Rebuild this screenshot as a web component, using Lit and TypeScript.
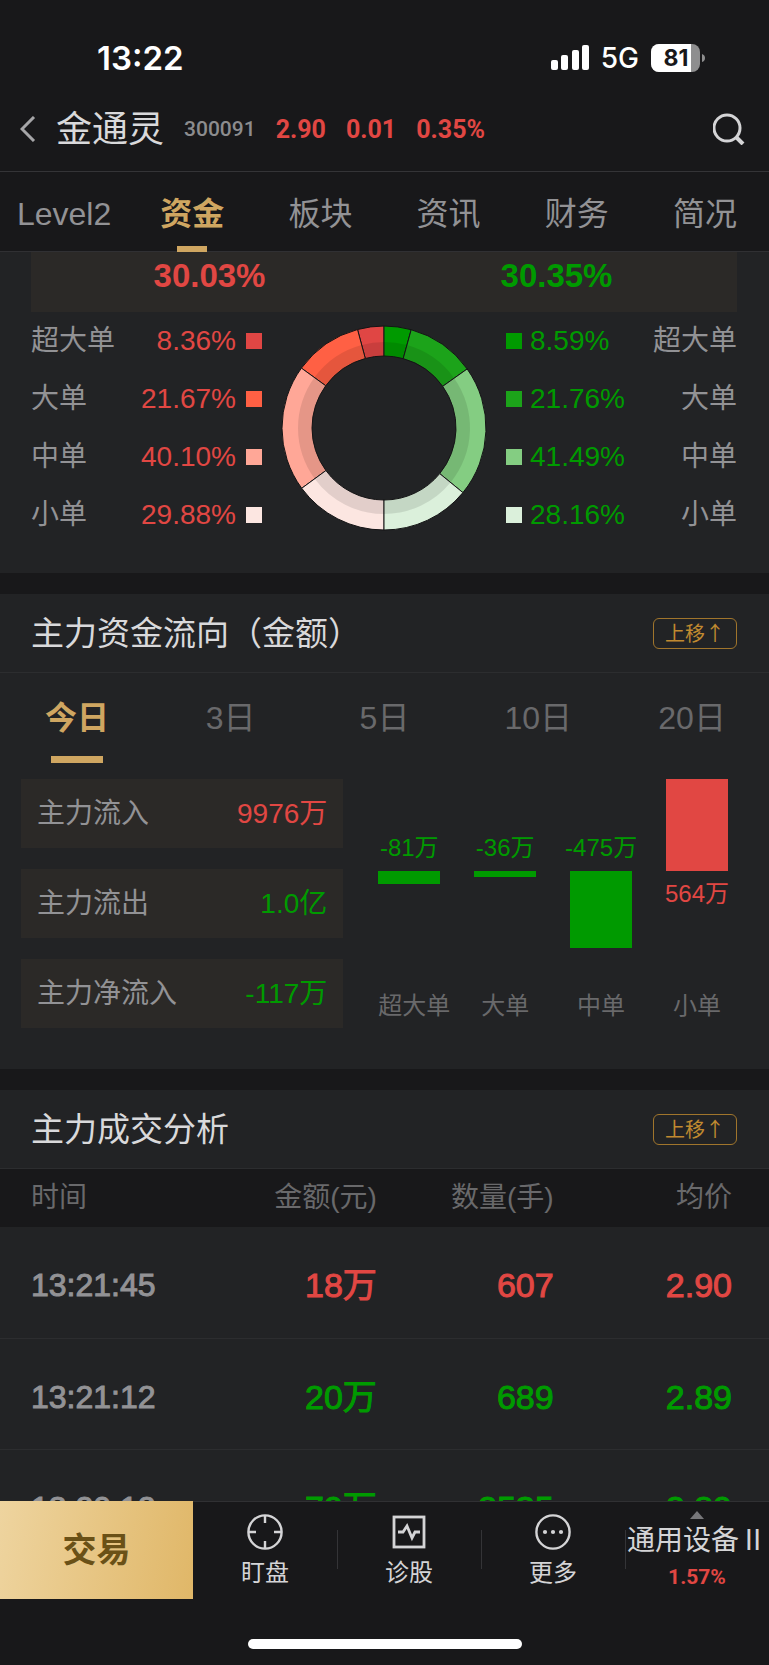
import { LitElement, html, css, svg } from "lit";
import { customElement, property } from "lit/decorators.js";
import { classMap } from "lit/directives/class-map.js";
import { styleMap } from "lit/directives/style-map.js";

const shared = css`
  :host,
  * {
    box-sizing: border-box;
  }
  button {
    margin: 0;
    padding: 0;
    border: 0;
    background: none;
    color: inherit;
    font: inherit;
    cursor: pointer;
  }
  h1, h2, p, ul {
    margin: 0;
    padding: 0;
    font-weight: 400;
    list-style: none;
  }
  .up {
    color: #e14743;
  }
  .down {
    color: #009a00;
  }
`;

interface Share {
  name: string;
  pct: number;
  color: string;
}

const INFLOW: Share[] = [
  { name: "超大单", pct: 8.36, color: "#e04644" },
  { name: "大单", pct: 21.67, color: "#ff6044" },
  { name: "中单", pct: 40.1, color: "#ffa797" },
  { name: "小单", pct: 29.88, color: "#fce6e1" },
];

const OUTFLOW: Share[] = [
  { name: "超大单", pct: 8.59, color: "#009a00" },
  { name: "大单", pct: 21.76, color: "#1ca31a" },
  { name: "中单", pct: 41.49, color: "#84cd82" },
  { name: "小单", pct: 28.16, color: "#dbf0db" },
];

const FLOWS = [
  { name: "超大单", value: -81 },
  { name: "大单", value: -36 },
  { name: "中单", value: -475 },
  { name: "小单", value: 564 },
];

const TRADES = [
  { time: "13:21:45", amount: "18万", count: "607", price: "2.90", dir: "up" },
  { time: "13:21:12", amount: "20万", count: "689", price: "2.89", dir: "down" },
  { time: "13:20:12", amount: "79万", count: "2535", price: "2.89", dir: "down" },
];

@customElement("status-bar")
export class StatusBar extends LitElement {
  static styles = [
    shared,
    css`
      :host {
        display: flex;
        align-items: center;
        justify-content: space-between;
        height: 87px;
        padding: 28px 64px 0 97px;
        color: #fff;
        font-family: Inter, sans-serif;
      }
      .time {
        font-size: 33px;
        font-weight: 600;
      }
      .right {
        display: flex;
        align-items: center;
        gap: 12px;
      }
      .net {
        font-size: 28px;
        font-weight: 500;
      }
      .battery text {
        font: 700 23px Inter, sans-serif;
        fill: #18181a;
      }
    `,
  ];
  render() {
    return html`
      <span class="time">13:22</span>
      <div class="right">
        <svg width="38" height="25" viewBox="0 0 38 25" fill="#fff" aria-label="信号">
          <rect x="0" y="15" width="7" height="10" rx="2" />
          <rect x="10" y="10" width="7" height="15" rx="2" />
          <rect x="21" y="5" width="7" height="20" rx="2" />
          <rect x="31" y="0" width="7" height="25" rx="2" />
        </svg>
        <span class="net">5G</span>
        <svg class="battery" width="54" height="28" viewBox="0 0 54 28">
          <clipPath id="cell"><rect width="49" height="28" rx="8" /></clipPath>
          <g clip-path="url(#cell)">
            <rect width="49" height="28" fill="#8e8e8f" />
            <rect width="40" height="28" fill="#fff" />
          </g>
          <path d="M51 10 Q54 11 54 14 Q54 17 51 18 Z" fill="#8e8e8f" />
          <text x="25" y="22" text-anchor="middle">81</text>
        </svg>
      </div>
    `;
  }
}

@customElement("stock-header")
export class StockHeader extends LitElement {
  static styles = [
    shared,
    css`
      :host {
        display: flex;
        align-items: center;
        height: 85px;
        padding: 0 24px 0 20px;
        border-bottom: 1px solid #343437;
      }
      svg {
        display: block;
      }
      .name {
        margin-left: 20px;
        padding-top: 2px;
        font-size: 36px;
        line-height: 44px;
        color: #d9d9db;
      }
      .quote {
        display: flex;
        align-items: center;
        gap: 20px;
        margin-left: 20px;
        font-family: Roboto, sans-serif;
        font-weight: 700;
        font-size: 25px;
      }
      .code {
        font-size: 21px;
        font-weight: 500;
        color: #8c8c8e;
      }
      .search {
        margin-left: auto;
      }
    `,
  ];
  render() {
    return html`
      <button aria-label="返回">
        <svg width="16" height="26" viewBox="0 0 16 26" fill="none" stroke="#a6a6a8" stroke-width="3">
          <path d="M14 1 2 13 14 25" />
        </svg>
      </button>
      <h1 class="name">金通灵</h1>
      <div class="quote">
        <span class="code">300091</span>
        <span class="up">2.90</span>
        <span class="up">0.01</span>
        <span class="up">0.35%</span>
      </div>
      <button class="search" aria-label="搜索">
        <svg width="32" height="32" viewBox="0 0 32 32" fill="none" stroke="#d4d4d6" stroke-width="3">
          <circle cx="14" cy="15" r="13" />
          <path d="M23 24 30 31" stroke-width="4" />
        </svg>
      </button>
    `;
  }
}

@customElement("page-tabs")
export class PageTabs extends LitElement {
  static styles = [
    shared,
    css`
      :host {
        display: block;
        position: relative;
        z-index: 1;
      }
      nav {
        display: grid;
        grid-template-columns: repeat(6, 1fr);
        height: 80px;
        border-bottom: 1px solid #303033;
        font-size: 32px;
        line-height: 40px;
        color: #929295;
      }
      button {
        position: relative;
        padding-top: 4px;
      }
      .active {
        color: #cfa661;
        font-weight: 700;
      }
      .active::after {
        content: "";
        position: absolute;
        left: calc(50% - 15px);
        bottom: -1px;
        width: 30px;
        height: 6px;
        background: #cfa661;
      }
    `,
  ];
  render() {
    const tabs = ["Level2", "资金", "板块", "资讯", "财务", "简况"];
    return html`<nav>
      ${tabs.map((t) => html`<button class=${classMap({ active: t === "资金" })}>${t}</button>`)}
    </nav>`;
  }
}

@customElement("share-ring")
export class ShareRing extends LitElement {
  static styles = css`
    :host {
      display: block;
    }
    svg {
      display: block;
      overflow: visible;
    }
  `;

  private ring(a0: number, a1: number, r0: number, r1: number): string {
    const p = (a: number, r: number) => {
      const t = (a * Math.PI) / 180;
      return `${(102 + r * Math.sin(t)).toFixed(2)} ${(102 - r * Math.cos(t)).toFixed(2)}`;
    };
    const s = a1 > a0 ? 1 : 0;
    return `M${p(a0, r1)} A${r1} ${r1} 0 0 ${s} ${p(a1, r1)} L${p(a1, r0)} A${r0} ${r0} 0 0 ${1 - s} ${p(a0, r0)} Z`;
  }

  private half(list: Share[], dir: number) {
    let at = 0;
    return list.map((s) => {
      const from = at;
      at += s.pct * 1.8;
      return svg`
        <path d=${this.ring(dir * from, dir * at, 72, 102)} fill=${s.color} />
        <path d=${this.ring(dir * from, dir * at, 72, 86)} fill="#000" fill-opacity="0.1" />
        <path d=${this.ring(dir * from, dir * at, 72, 102)} fill="none" stroke="#141415" />
      `;
    });
  }

  render() {
    return html`<svg width="204" height="204" viewBox="0 0 204 204" role="img" aria-label="资金占比">
      ${this.half(INFLOW, -1)}${this.half(OUTFLOW, 1)}
    </svg>`;
  }
}

@customElement("share-panel")
export class SharePanel extends LitElement {
  static styles = [
    shared,
    css`
      :host {
        display: block;
        padding: 0 32px 29px 31px;
        background: #222325;
      }
      .total {
        display: grid;
        grid-template-columns: 1fr 1fr;
        height: 60px;
        padding: 0 7px 12px 5px;
        align-items: center;
        text-align: center;
        background: #2b2927;
        font-size: 33px;
        font-weight: 700;
      }
      .body {
        display: grid;
        grid-template-columns: 1fr auto 1fr;
        gap: 20px;
        align-items: center;
        font-size: 28px;
        line-height: 36px;
      }
      li {
        display: flex;
        align-items: center;
        height: 58px;
      }
      .name {
        color: #929295;
      }
      .pct {
        margin: 0 10px 0 auto;
      }
      .dot {
        width: 16px;
        height: 16px;
      }
      .right li {
        flex-direction: row-reverse;
      }
      .right .pct {
        margin: 0 auto 0 8px;
      }
    `,
  ];
  private list(items: Share[], tone: string, side: string) {
    return html`<ul class=${side}>
      ${items.map(
        (s) => html`<li>
          <span class="name">${s.name}</span>
          <span class="pct ${tone}">${s.pct.toFixed(2)}%</span>
          <span class="dot" style=${styleMap({ background: s.color })}></span>
        </li>`
      )}
    </ul>`;
  }
  render() {
    return html`
      <div class="total"><span class="up">30.03%</span><span class="down">30.35%</span></div>
      <div class="body">
        ${this.list(INFLOW, "up", "left")}
        <share-ring></share-ring>
        ${this.list(OUTFLOW, "down", "right")}
      </div>
    `;
  }
}

@customElement("section-head")
export class SectionHead extends LitElement {
  @property() heading = "";
  static styles = [
    shared,
    css`
      :host {
        display: flex;
        align-items: center;
        justify-content: space-between;
        height: 79px;
        padding: 0 32px 0 31px;
        border-bottom: 1px solid #2c2d2f;
      }
      h2 {
        padding-top: 2px;
        font-size: 33px;
        line-height: 40px;
        color: #d9d9db;
      }
      .move {
        height: 31px;
        width: 84px;
        border: 1px solid #a0752c;
        border-radius: 6px;
        font-family: "Noto Sans CJK SC", sans-serif;
        font-size: 20px;
        line-height: 28px;
        color: #c08a30;
      }
    `,
  ];
  render() {
    return html`<h2>${this.heading}</h2><button class="move">上移↑</button>`;
  }
}

@customElement("flow-panel")
export class FlowPanel extends LitElement {
  static styles = [
    shared,
    css`
      :host {
        display: block;
        background: #222325;
      }
      .tabs {
        display: grid;
        grid-template-columns: repeat(5, 1fr);
        height: 90px;
        font-size: 32px;
        line-height: 40px;
        color: #69696b;
      }
      .tabs button {
        position: relative;
      }
      .tabs .active {
        color: #cfa661;
        font-weight: 700;
      }
      .tabs .active::after {
        content: "";
        position: absolute;
        left: calc(50% - 26px);
        bottom: 0;
        width: 52px;
        height: 7px;
        background: #cfa661;
      }
      .body {
        display: grid;
        grid-template-columns: 42fr 50fr;
        gap: 18px;
        padding: 16px 24px 41px 21px;
      }
      .boxes {
        display: grid;
        gap: 21px;
      }
      .box {
        display: flex;
        align-items: center;
        justify-content: space-between;
        height: 69px;
        padding: 0 16px;
        background: #2b2927;
        font-size: 28px;
        line-height: 36px;
        color: #929295;
      }
      .chart {
        display: grid;
        grid-template-columns: repeat(4, 1fr);
        font-size: 24px;
        line-height: 30px;
        white-space: nowrap;
      }
      .col {
        display: grid;
        grid-template-rows: 92px 1fr 37px;
        justify-items: center;
      }
      .half {
        display: flex;
        flex-direction: column;
        align-items: center;
        gap: 8px;
      }
      .top {
        justify-content: flex-end;
        padding-bottom: 8px;
      }
      .top.filled {
        padding-bottom: 0;
      }
      .bar {
        width: 62px;
        background: currentColor;
      }
      .label {
        width: 62px;
        text-align: center;
        color: #69696b;
      }
    `,
  ];
  render() {
    const peak = 564;
    return html`
      <section-head heading="主力资金流向（金额）"></section-head>
      <div class="tabs">
        ${["今日", "3日", "5日", "10日", "20日"].map(
          (t) => html`<button class=${classMap({ active: t === "今日" })}>${t}</button>`
        )}
      </div>
      <div class="body">
        <div class="boxes">
          <div class="box"><span>主力流入</span><span class="up">9976万</span></div>
          <div class="box"><span>主力流出</span><span class="down">1.0亿</span></div>
          <div class="box"><span>主力净流入</span><span class="down">-117万</span></div>
        </div>
        <div class="chart">
          ${FLOWS.map((f) => {
            const bar = html`<div class="bar" style=${styleMap({ height: `${Math.round((Math.abs(f.value) / peak) * 92)}px` })}></div>`;
            const text = html`<span>${f.value}万</span>`;
            const up = f.value > 0;
            return html`<div class="col ${up ? "up" : "down"}">
              <div class=${classMap({ half: true, top: true, filled: up })}>${up ? bar : text}</div>
              <div class="half">${up ? html`<span></span>${text}` : bar}</div>
              <div class="label">${f.name}</div>
            </div>`;
          })}
        </div>
      </div>
    `;
  }
}

@customElement("trade-panel")
export class TradePanel extends LitElement {
  static styles = [
    shared,
    css`
      :host {
        display: block;
        background: #222325;
      }
      table {
        width: 100%;
        table-layout: fixed;
        border-collapse: collapse;
        line-height: 40px;
      }
      th {
        height: 58px;
        padding: 0;
        background: #18181a;
        font-size: 28px;
        font-weight: 400;
        text-align: right;
        color: #69696b;
      }
      td {
        height: 111px;
        padding: 6px 0 0;
        border-bottom: 1px solid #2c2d2f;
        font-size: 34px;
        text-align: right;
        -webkit-text-stroke: 1px currentColor;
      }
      th:first-child,
      td:first-child {
        width: 26%;
        padding-left: 31px;
        text-align: left;
      }
      td:first-child {
        font-size: 32px;
        color: #929295;
      }
      .mid {
        width: 23%;
      }
      th:last-child,
      td:last-child {
        padding-right: 37px;
      }
    `,
  ];
  render() {
    return html`
      <section-head heading="主力成交分析"></section-head>
      <table>
        <thead>
          <tr><th>时间</th><th class="mid">金额(元)</th><th class="mid">数量(手)</th><th>均价</th></tr>
        </thead>
        <tbody>
          ${TRADES.map(
            (t) => html`<tr class=${t.dir}>
              <td>${t.time}</td><td>${t.amount}</td><td>${t.count}</td><td>${t.price}</td>
            </tr>`
          )}
        </tbody>
      </table>
    `;
  }
}

@customElement("bottom-bar")
export class BottomBar extends LitElement {
  static styles = [
    shared,
    css`
      :host {
        display: block;
        height: 164px;
        background: #18181a;
      }
      .bar {
        display: flex;
        height: 98px;
      }
      .trade {
        flex: 0 0 193px;
        background: linear-gradient(100deg, #eed49f, #e0b768);
        color: #6a5117;
        font-size: 34px;
        line-height: 40px;
        font-weight: 700;
      }
      .item {
        position: relative;
        flex: 1 1 0;
        display: flex;
        flex-direction: column;
        align-items: center;
        padding-top: 12px;
        border-top: 1px solid #303033;
        font-size: 24px;
        line-height: 34px;
        color: #d4d4d6;
        white-space: nowrap;
      }
      .item + .item::before {
        content: "";
        position: absolute;
        left: 0;
        top: 28px;
        width: 1px;
        height: 39px;
        background: #343437;
      }
      .item svg {
        display: block;
        margin-bottom: 6px;
      }
      .item.sector {
        padding-top: 9px;
      }
      .item.sector svg {
        margin-bottom: 3px;
      }
      .sector .title {
        font-size: 28px;
        line-height: 38px;
      }
      .sector .rate {
        font-family: Roboto, sans-serif;
        font-size: 21px;
        font-weight: 700;
      }
      .home {
        width: 274px;
        height: 10px;
        margin: 40px auto 0;
        border-radius: 5px;
        background: #fff;
      }
    `,
  ];
  render() {
    return html`
      <div class="bar">
        <button class="trade">交易</button>
        <button class="item">
          <svg width="36" height="36" viewBox="0 0 36 36" fill="none" stroke="#d4d4d6" stroke-width="2.4">
            <circle cx="18" cy="18" r="16.6" />
            <path d="M18 2v7M18 27v7M2 18h7M27 18h7" />
          </svg>
          <span>盯盘</span>
        </button>
        <button class="item">
          <svg width="36" height="36" viewBox="0 0 36 36" fill="none" stroke="#d4d4d6" stroke-width="2.8">
            <rect x="3" y="3" width="30" height="30" />
            <path d="M7 18h5l4-6 5 12 3-6h5" />
          </svg>
          <span>诊股</span>
        </button>
        <button class="item">
          <svg width="36" height="36" viewBox="0 0 36 36" fill="none" stroke="#d4d4d6" stroke-width="2.4">
            <circle cx="18" cy="18" r="16.6" />
            <g fill="#d4d4d6" stroke="none">
              <circle cx="10" cy="18" r="2.1" />
              <circle cx="18" cy="18" r="2.1" />
              <circle cx="26" cy="18" r="2.1" />
            </g>
          </svg>
          <span>更多</span>
        </button>
        <button class="item sector">
          <svg width="14" height="8" viewBox="0 0 14 8"><path d="M7 0 14 8H0Z" fill="#77777a" /></svg>
          <span class="title">通用设备Ⅱ</span>
          <span class="rate up">1.57%</span>
        </button>
      </div>
      <div class="home"></div>
    `;
  }
}

@customElement("app-root")
export class AppRoot extends LitElement {
  static styles = css`
    :host {
      display: flex;
      flex-direction: column;
      height: 100vh;
      background: #18181a;
      font-family: "Liberation Sans", "Noto Sans CJK SC", sans-serif;
    }
    main {
      flex: 1 1 0;
      min-height: 0;
      display: flex;
      flex-direction: column;
      gap: 21px;
      overflow: hidden;
    }
    main > * {
      flex: none;
    }
  `;
  render() {
    return html`
      <status-bar></status-bar>
      <stock-header></stock-header>
      <page-tabs></page-tabs>
      <main>
        <share-panel></share-panel>
        <flow-panel></flow-panel>
        <trade-panel></trade-panel>
      </main>
      <bottom-bar></bottom-bar>
    `;
  }
}
